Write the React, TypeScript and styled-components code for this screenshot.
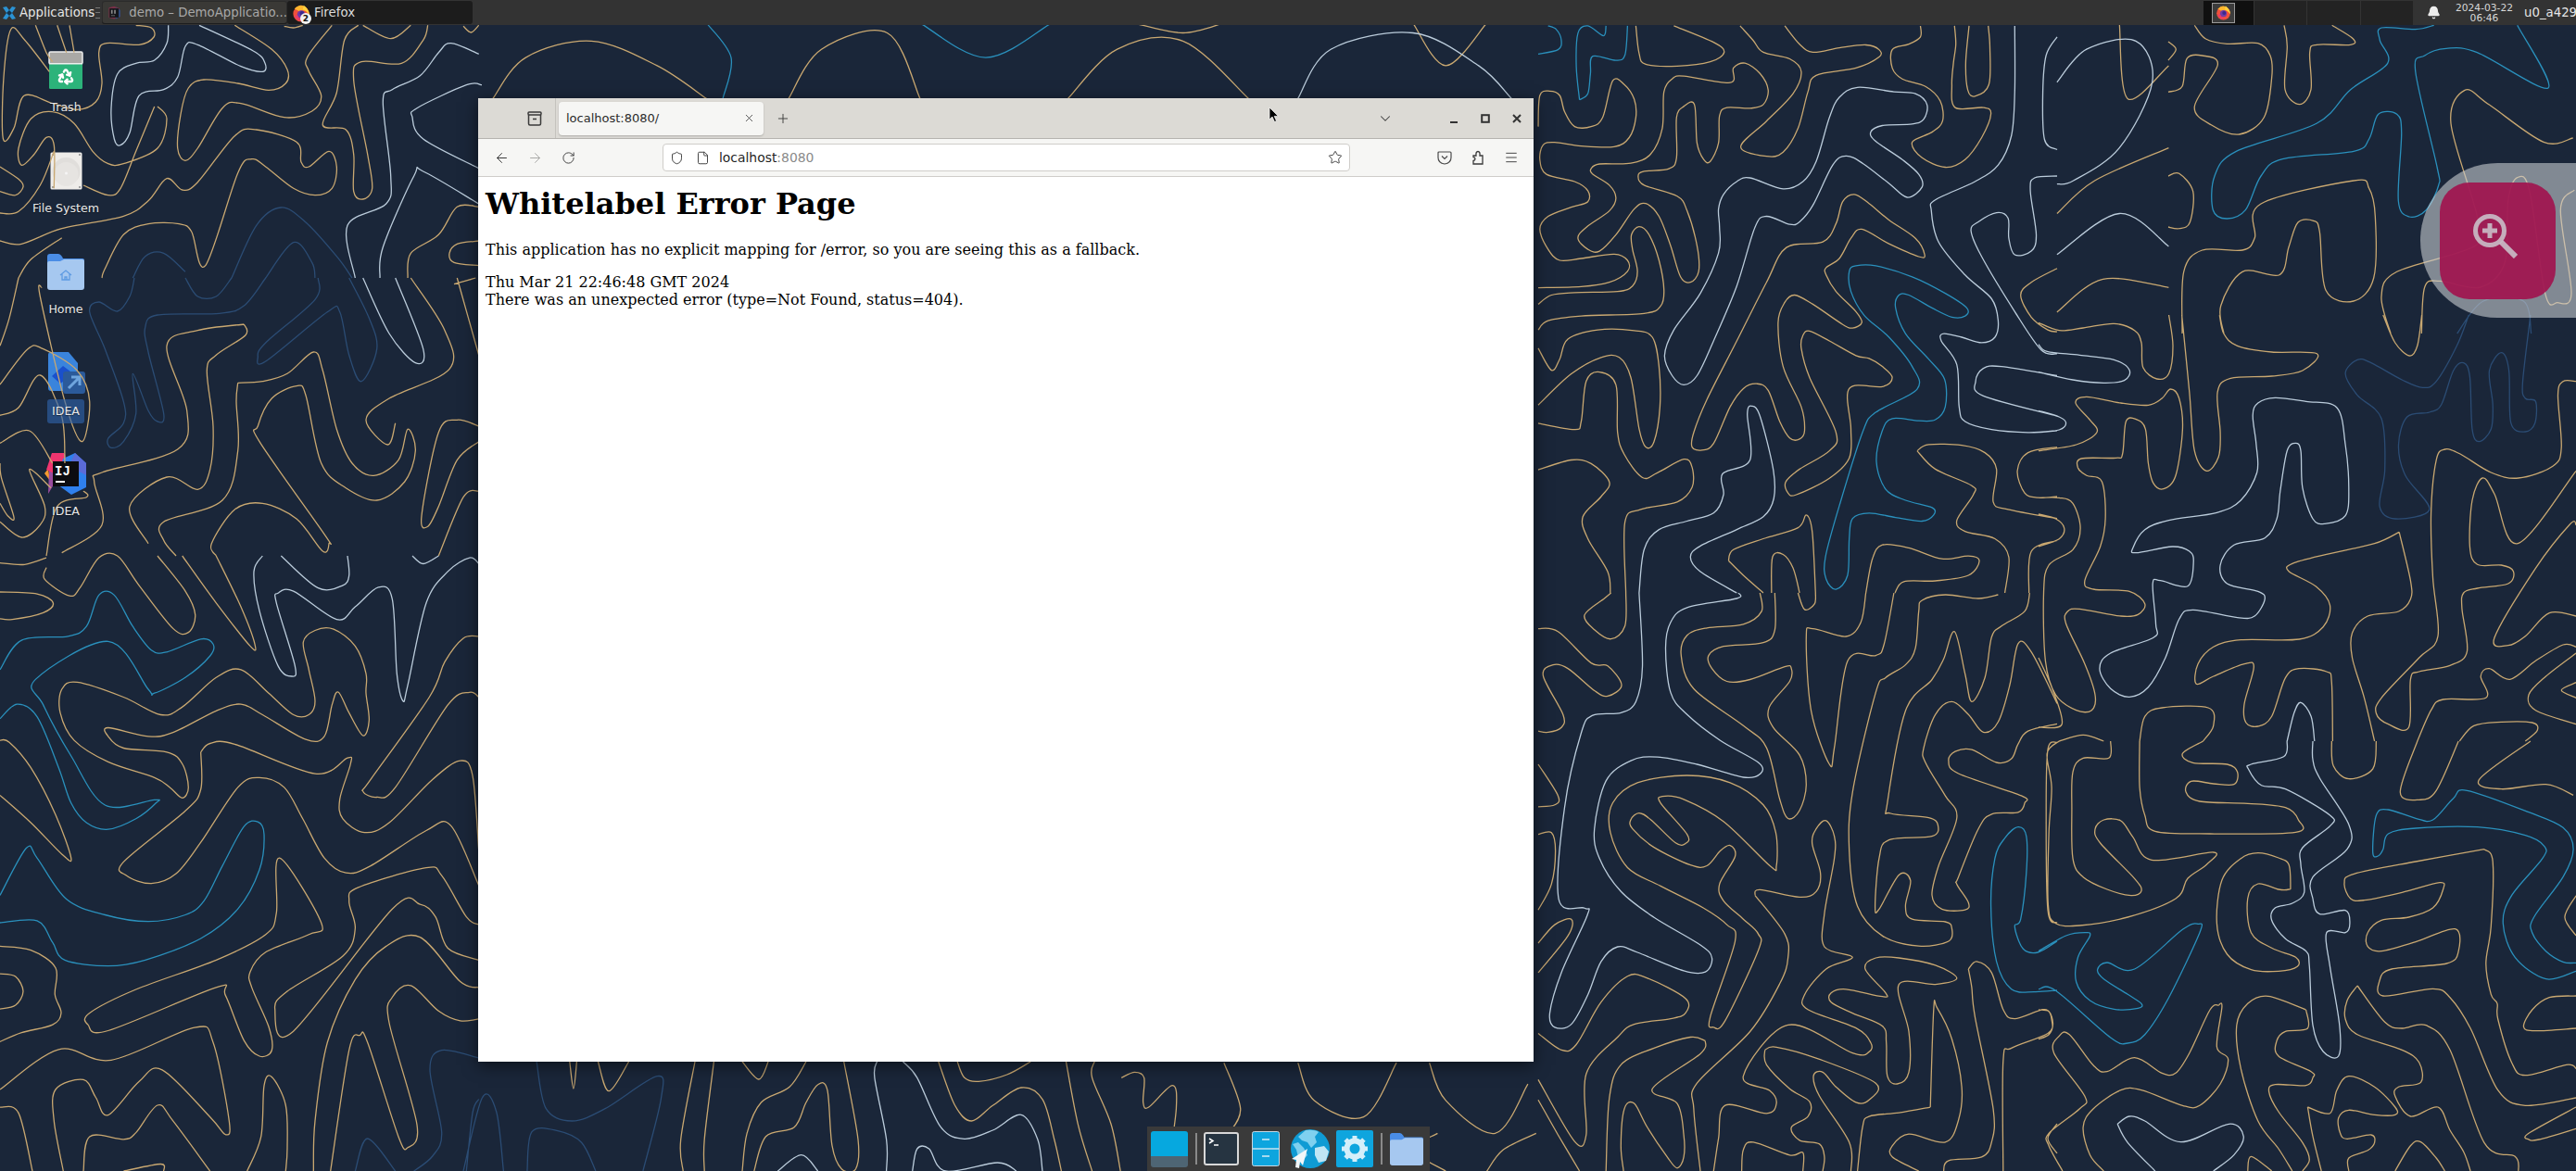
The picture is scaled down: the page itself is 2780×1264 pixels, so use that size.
import React from "react";
import styled, { createGlobalStyle } from "styled-components";
import {
    ArrowLeft,
    ArrowRight,
    Bell,
    ChevronDown,
    File,
    Menu,
    Plus,
    Recycle,
    RotateCw,
    Shield,
    Star,
    X,
} from "lucide-react";

type Trace = {
    x: number;
    y: number;
    sx: number;
    sy: number;
    g?: string[];
    w?: string[];
    b?: string[];
    d?: string[];
};

// contour lines of the wallpaper, noted per region of the desktop
const TRACES: Trace[] = [
    {
        x: 1660, y: 20, sx: 2.8, sy: 2.529,
        g: [
            "295,20 305,95 325,125 420,130 520,118 562,92 530,65 410,20",
            "610,20 650,60 680,92 760,110 795,145 770,205 690,280 612,350 690,376 740,365 785,300 815,200 840,155 960,135 1030,105 1030,85 990,72 910,80 830,92 790,70 745,20",
            "1155,20 1155,50 1120,70 1070,85 1070,135 1100,165 1170,185 1215,225 1222,280 1190,310 1130,338 1160,380 1230,406 1290,385 1340,325 1368,260 1345,243 1260,243 1250,180 1255,120 1262,70 1258,20",
            "1302,20 1292,120 1298,195 1320,212 1362,180 1365,80 1360,20",
            "1568,682 1490,720 1458,755 1490,815 1540,850 1568,855",
            "1568,1170 1480,1185 1448,1235 1470,1295 1510,1308 1568,1305",
            "1145,1180 1180,1163 1280,1165 1350,1185 1385,1230 1375,1320 1420,1340 1568,1365",
            "1145,1180 1200,1230 1310,1275 1315,1300 1265,1370 1290,1400 1380,1420 1422,1470 1410,1568",
            "1568,1425 1490,1455 1483,1568",
            "1078,1568 1105,1537 1200,1535 1300,1520 1333,1480 1300,1467 1220,1475 1120,1445 1040,1437 1010,1475 990,1568",
            "940,1010 1040,1005 1070,980 1040,950 1000,928 960,920 880,880 820,853 800,865 795,900 820,980 900,1130 880,1180 790,1230 748,1265 755,1295 780,1300 880,1255 940,1200 945,1120 940,1010",
            "870,680 910,655 945,600 978,575 1060,615 1150,650 1168,645 1140,600 1060,550 1000,505 955,480 920,500 900,560 860,610 750,625 690,720 600,880 510,1040 470,1130 465,1170 495,1178 530,1160 580,1060 620,1010 660,997 695,1015 730,1100 760,1145 790,1148 805,1125 795,1060 740,950 725,830 745,775 775,755 830,780 920,835 950,845 978,830 960,800 900,745 870,700 870,680",
            "0,295 5,210 35,198 65,210 80,255 110,295 160,295 195,270 225,170 260,180 290,220 295,270 275,325 230,350 130,348 50,338 15,345 5,385 25,425 110,445 150,470 150,500 100,515 30,540 5,575 30,630 65,660 130,655 230,643 270,660 270,690 215,720 130,732 0,735",
            "0,780 40,755 110,748 240,745 285,730 300,690 285,630 282,590 305,568 335,590 365,660 380,740 370,785 320,805 130,812 30,825 0,850",
            "120,600 145,570 215,525 235,490 215,455 165,425 160,410 185,397 280,395 340,370 375,300 380,200 405,165 440,157 580,175 590,135 625,122 670,150 695,195 680,235 640,245 570,243 548,265 545,340 520,390 500,385 480,340 472,235 440,240 418,270 418,380 395,410 320,417 302,430 320,455 420,485 450,525 480,620 485,690 460,720 430,705 400,620 365,540 325,505 290,520 235,590 185,635 150,630 120,600",
            "0,900 40,960 65,930 90,875 180,850 290,852 345,870 365,950 368,1060 350,1155 325,1170 305,1120 280,980 245,925 190,925 100,970 0,1055",
            "0,1105 110,1122 130,1100 145,990 185,965 235,1000 240,1130 260,1190 315,1253 360,1240 440,1203 465,1225 465,1280 420,1320 310,1340 262,1375 265,1568",
            "0,1232 100,1205 160,1215 215,1265 190,1305 135,1360 150,1420 210,1510 218,1568",
            "575,1480 590,1450 680,1420 785,1390 810,1355 828,1400 838,1568",
            "575,1480 620,1520 680,1568",
            "705,1568 708,1470 740,1463 770,1500 790,1568",
        ],
        w: [
            "1440,20 1440,200 1430,320 1390,400 1320,445 1200,495 1188,525 1210,610 1290,700 1370,765 1390,825 1380,870 1340,885 1280,870 1225,860 1218,880 1265,945 1272,1060 1290,1100 1370,1122 1480,1130 1568,1125",
            "1568,50 1535,100 1525,200 1530,330 1568,358",
            "1568,430 1500,435 1487,470 1505,590 1490,635 1440,645 1422,600 1420,545 1385,530 1330,555 1308,580 1340,650 1440,800 1520,905 1568,915",
            "1568,975 1400,950 1345,955 1322,990 1345,1030 1568,1085",
            "545,520 560,480 600,445 640,435 740,465 800,445 840,390 880,270 910,215 965,188 1075,200 1140,205 1175,235 1165,275 1130,288 1040,292 1005,310 1020,335 1100,385 1150,425 1160,460 1115,488 1060,450 980,395 930,375 890,400 830,510 790,555 760,562 690,540 655,570 600,730 530,880 480,975 440,1000 405,975 382,920 410,850 490,750 545,640 548,570 545,520",
            "305,1568 320,1450 365,1395 450,1372 530,1350 560,1300 557,1243 640,1205 632,1080 645,1058 670,1085 710,1230 712,1310 680,1360 600,1395 490,1440 460,1470 490,1510 600,1568",
        ],
        b: [
            "0,97 60,85 70,60 55,30 30,20",
            "125,222 150,205 158,150 165,103 235,114 262,100 270,20",
            "205,20 197,47 150,20 120,40 115,130 125,222",
            "940,690 960,675 1020,675 1130,705 1230,750 1295,790 1290,812 1250,815 1190,790 1120,755 1090,755 1080,790 1110,860 1180,930 1228,985 1230,1060 1200,1095 1150,1098 1070,1092 1040,1125 1022,1210 1050,1285 1110,1315 1190,1335 1195,1355 1160,1372 1080,1362 1000,1350 950,1365 940,1420 935,1520 900,1558 870,1530 868,1470 910,1330 980,1130 1020,1075 1145,1012 1130,950 1060,870 985,810 945,745 940,690",
        ],
    },
    {
        x: 2340, y: 0, sx: 3, sy: 3,
        g: [
            "85,82 120,125 190,142 290,140 330,180 335,250 310,380 230,435 140,405 85,345 160,210 110,180 60,190 45,280 0,298",
            "0,135 25,160 0,195",
            "375,82 385,150 378,290 425,338 462,290 458,170 480,145 590,145 598,125 530,82",
            "0,570 35,562 80,620 70,720 35,740 0,735",
            "45,1080 50,880 110,810 240,810 280,770 300,660 600,585 650,610 670,700 665,900 600,975 510,940 490,750 470,715 420,720 390,800 360,890 240,880 170,990 180,1080",
            "720,1080 690,960 740,880 995,795 1000,700 915,400 960,292 1040,340 1215,460 1310,447",
            "820,1080 830,930 880,910 1010,930 1090,850 1100,650 1130,575 1170,620 1220,950 1260,980 1305,950 1270,680 1315,615",
        ],
        b: [
            "860,82 800,95 690,90 685,130 710,205 590,290 480,400 220,490 150,570 145,680 190,708 250,680 300,570 370,515 600,490 650,450 680,370 740,370 755,430 745,650 780,702 835,680 875,600 870,540 800,230 830,180 900,157 1000,170 1230,285 1130,82",
        ],
        d: ["935,1080 1020,975 1150,975 1175,1080"],
    },
    {
        x: 2200, y: 340, sx: 2.703, sy: 3,
        g: [
            "0,25 60,50 130,42 220,28 280,50 300,90 305,170 345,207 380,190 392,100 380,0",
            "0,440 110,420 170,380 150,340 108,285 140,265 240,285 320,292 360,270 385,240 410,270 420,370 400,520 365,563 335,545 320,480 312,370 285,338 255,345 245,450 225,463 125,465 115,495 140,520 185,540 195,660 180,750 135,860 160,888 265,895 310,935 290,970 240,975 120,952 85,960 80,1000 135,1130 165,1230 155,1280 110,1280 50,1230 20,1120 15,900 30,810 100,760 122,690 100,610 60,592 0,592",
            "0,645 50,660 75,690 60,725 0,750",
            "418,0 440,250 455,440 490,505 525,460 530,380 522,250 560,205 680,198 770,180 812,125 680,120 580,100 540,60 528,0",
            "1005,0 1040,90 1082,132 1105,100 1118,0",
            "1568,215 1530,215 1515,260 1525,430 1500,490 1400,528 1320,510 1230,450 1185,435 1160,470 1145,640 1150,850 1165,1040 1110,1110 1000,1240 985,1290 1020,1325 1080,1335 1085,1180 1110,1155 1200,1135 1250,1090 1235,950 1240,900 1280,885 1370,870 1385,830 1350,810 1280,808 1258,750 1265,600 1295,528 1330,580 1398,740 1568,505",
            "1568,680 1550,678 1450,820 1330,1045 1370,1070 1420,1040 1490,965 1568,975",
            "1568,1075 1530,1068 1450,1120 1375,1180 1315,1145 1290,1170 1305,1240 1180,1245 1145,1280 1105,1380",
            "1568,1095 1480,1170 1430,1230 1450,1280 1568,1325",
            "1568,1190 1525,1215 1568,1240",
            "1228,1380 1270,1330 1350,1318 1440,1320 1455,1345 1420,1380",
            "1052,703 980,740 840,775 740,805 730,830 810,880 850,940 830,1010 760,1050 590,1052 510,1075 465,1130 460,1195 510,1170 600,1130 628,1140 600,1260 605,1320 640,1332 680,1300 720,1175 760,1145 840,1155 855,1190 858,1380",
            "1052,703 1085,860 1085,920 1050,960 960,975 915,1030 915,1110 950,1240 980,1380",
            "295,1380 310,1300 360,1272 495,1272 510,1330 480,1380",
            "60,1380 130,1360 190,1380",
            "0,1110 40,1210 68,1325 0,1335",
        ],
        w: [
            "0,95 25,118 120,130 220,145 265,178 250,212 190,220 100,210 0,185",
            "0,310 60,330 80,350 60,372 0,380",
            "625,325 640,285 690,268 780,280 870,300 895,420 905,560 895,650 835,676 800,660 770,560 765,440 750,415 725,440 705,570 695,660 660,722 570,745 530,810 550,870 640,895 660,920 630,975 580,980 450,955 410,985 370,1110 320,1205 265,1237 210,1210 178,1145 210,1095 335,1045 342,1000 333,870 355,860 435,878 452,800 440,765 390,750 285,770 275,755 310,695 380,665 520,640 590,600 637,510 635,420 625,325",
            "725,1380 745,1290 765,1255 795,1300 805,1380",
        ],
        d: [
            "1255,0 1220,100 1160,215 1120,235 1060,210 970,155 930,145 895,190 930,260 1000,335 1010,500 995,620 1040,660 1140,630 1070,520 1050,420 1075,330 1140,315 1175,290 1210,180 1240,155 1258,200 1265,370 1285,410 1320,370 1325,290 1315,180 1350,122 1372,180 1378,350 1420,378 1448,350 1450,280 1420,270 1412,220 1435,0",
        ],
    },
    {
        x: 1660, y: 640, sx: 2.8, sy: 2.513,
        g: [
            "265,0 262,90 220,125 170,100 140,60 200,15 220,0",
            "670,0 675,50 620,85 510,95 450,115 432,170 470,260 620,360 690,420 730,560 755,612 790,590 810,520 790,440 710,365 698,310 760,240 765,205 745,200 640,235 570,240 525,205 515,170 560,145 680,135 715,100 715,0",
            "785,0 805,45 835,30 838,0",
            "990,0 975,80 930,118 830,97 810,120 825,320 880,465 895,420 935,185 1020,170 1045,140 1075,0",
            "1390,5 1330,15 1230,5 1160,20 1150,50 1140,150 1110,195 1050,230 1020,270 950,540 940,700 965,850 1040,930 1150,958 1240,945 1250,910 1230,892 1130,885 1110,850 1125,780 1090,765 1030,858 1018,850 1030,720 1060,670 1190,660 1208,630 1180,610 1065,598 1055,570 1110,320 1190,235 1225,180 1258,105 1290,220 1310,295 1350,230 1370,120 1400,90 1470,50 1485,0",
            "1568,355 1480,375 1450,410 1430,450 1385,460 1310,425 1260,430 1240,455 1270,490 1460,550 1470,570 1450,595 1370,600 1330,640 1270,770 1265,790 1300,840 1290,860 1220,858 1190,820 1210,740 1265,610 1230,550 1170,460 1165,420 1200,330 1250,295 1300,330 1345,378 1390,350 1425,250 1450,138 1490,160 1568,300",
            "1568,405 1540,425 1535,600 1540,860 1568,895",
            "720,740 718,650 680,575 580,515 450,495 300,515 225,570 218,650 270,745 370,795 500,855 570,900 595,945 520,1150 530,1178 565,1160 665,970 665,925 620,885 560,835 548,790 595,715 580,685 550,700 510,740 460,738 350,690 285,640 280,615 305,597 340,615 415,678 445,680 450,655 370,570 375,552 440,560 560,620 700,740 720,740",
            "655,820 670,805 790,825 840,810 853,760 828,680 840,640 870,618 895,660 895,720 865,870 865,960 950,988 870,1020 805,1090 815,1130 960,1180 1005,1220 1000,1245 950,1248 755,1172 620,1310 700,1350 720,1385 690,1412 565,1390 545,1480 530,1568",
            "655,820 745,925 755,990 730,1060 640,1190 480,1330 470,1400 490,1568",
            "1265,1045 1200,1010 1090,990 1020,990 988,1020 1050,1085 1040,1095 930,1075 885,1085 885,1110 950,1140 1040,1175 1052,1220 1055,1310 1085,1332 1120,1300 1120,1190 1090,1062 1200,1062 1265,1045",
            "1185,1395 1195,1130 1205,1125 1250,1210 1280,1340 1270,1430 1230,1490 1120,1468 1070,1500 1070,1530 1150,1568",
            "1185,1395 1090,1410 1000,1420 980,1450 965,1568",
            "685,1240 720,1232 850,1265 1020,1330 1000,1375 960,1382 900,1340 860,1300 832,1310 850,1365 940,1490 945,1568",
            "685,1240 690,1280 760,1345 820,1380 815,1420 765,1450 790,1485 850,1495 865,1530 860,1568",
            "1300,1020 1325,1000 1370,1030 1405,1130 1440,1155 1530,1130 1552,1160 1540,1195 1430,1235 1405,1270 1405,1568",
            "1300,1020 1310,1070 1320,1150 1375,1400 1370,1490 1340,1530 1240,1540 1225,1568",
            "1568,1440 1540,1480 1568,1520",
            "0,97 60,105 160,190 210,198 252,250 210,280 170,265 90,205 45,195 15,225 75,330 70,365 30,378 0,375",
            "0,465 60,550 50,575 0,580",
            "0,655 40,650 52,700 40,790 0,860",
            "0,950 50,900 100,885 90,930 0,1030",
            "0,1195 70,1240 115,1225 190,1110 270,1040 330,1045 445,1100 445,1140 400,1155 290,1170 240,1205 145,1305 145,1470 110,1488 0,1320",
            "0,1375 60,1470 125,1568",
            "505,1215 460,1205 350,1235 250,1280 215,1370 205,1568",
            "505,1215 490,1250 345,1345 420,1385 440,1470 440,1530 420,1560 390,1530 330,1450 290,1385 260,1400 250,1500 258,1568",
            "615,1568 620,1510 650,1490 760,1525 800,1518 800,1568",
        ],
        w: [
            "305,0 315,200 295,295 250,325 165,332 130,380 80,580 62,830 140,855 148,875 70,1030 35,1140 50,1178 100,1170 150,1090 190,1000 240,960 300,975 440,1025 505,1028 525,990 490,955 350,880 250,810 185,720 170,640 205,510 280,455 360,445 480,465 620,500 672,490 665,460 550,400 450,330 400,270 385,150 400,80 450,40 600,15 605,0",
        ],
        b: [
            "1568,1078 1500,1082 1430,1075 1385,1000 1368,850 1380,720 1410,665 1450,635 1475,660 1475,760 1458,885 1440,905 1465,965 1510,975 1568,945",
        ],
    },
    {
        x: 2200, y: 800, sx: 2.703, sy: 3,
        g: [
            "210,0 205,55 130,55 100,100 97,220 100,380 130,440 200,480 270,500 300,485 280,445 180,330 165,285 190,255 240,258 275,310 330,385 510,360 490,400 435,445 400,510 260,570 120,597 50,590 28,530 30,300 38,150 25,40 60,0",
            "295,0 295,150 310,240 340,292 500,300 750,295 758,255 720,215 610,202 470,195 430,165 445,130 510,138 570,140 580,100 550,75 450,70 420,40 480,0",
            "855,0 860,80 905,122 975,90 985,0",
            "1105,0 1055,165 1110,190 1160,160 1225,0",
            "1435,0 1285,125 1350,155 1480,140 1560,175",
            "1568,500 1535,570 1568,630",
            "1300,350 1100,390 920,430 892,460 910,510 950,515 1060,490 1170,458 1180,480 1150,540 1080,570 1000,580 960,620 960,665 1000,680 1100,650 1215,608 1225,680 1190,720 1030,738 995,775 1005,825 1150,802 1200,830 1260,930 1340,1130 1420,1180 1568,1155",
            "1300,350 1325,390 1320,600 1305,720 1320,820 1338,850 1340,900 1380,1040 1420,1082 1540,1048 1568,1060",
            "1568,825 1490,830 1440,870 1415,925 1450,938 1568,930",
            "1568,1185 1430,1270 1430,1290 1460,1290 1568,1255",
            "0,870 30,875 42,915 30,950 0,965",
            "730,480 700,480 640,462 610,510 620,620 680,670 750,700 755,730 700,745 620,740 550,690 520,590 535,450 590,380 640,362 700,378 730,400 735,470 730,480",
            "525,855 500,870 440,1010 400,1075 360,1075 280,1025 200,1070 160,1050 90,950 60,955 45,1010 135,1150 120,1190 30,1270 30,1310 70,1392",
            "525,855 535,860 520,990 553,1030 530,1110 470,1180 420,1180 300,1130 240,1130 160,1190 130,1250 150,1340 190,1392",
            "780,870 670,826 610,850 578,920 590,1060 640,1230 700,1320 740,1392",
            "780,870 785,930 720,940 695,970 700,1020 795,1070 800,1090 780,1115 690,1112 672,1135 700,1200 770,1300 790,1355 770,1392",
            "930,792 900,840 895,900 930,950 1060,1000 1110,1040 1115,1105 1050,1120 1040,1150 1085,1215 1165,1185 1200,1260 1240,1330 1260,1392",
            "930,792 1010,910 1060,930 1130,920 1200,1000 1300,1300 1390,1345 1400,1392",
            "785,1185 850,1205 870,1130 905,1085 980,1120 1040,1185 1040,1210 980,1210 905,1195 875,1220 880,1270 900,1288 970,1275 980,1300 960,1325 905,1350 905,1392",
            "785,1185 800,1280 825,1392",
            "1040,1392 1085,1310 1115,1298 1160,1350 1185,1392",
            "610,1392 620,1345 680,1392",
        ],
        w: [
            "725,0 715,50 620,75 612,90 650,143 720,155 850,240 850,275 770,345 765,400 775,490 740,525 690,540 680,580 720,640 780,680 790,730 800,920 830,1005 875,1020 878,920 850,730 840,620 895,620 908,590 895,548 820,560 800,510 800,440 900,350 905,270 820,120 800,60 800,0",
            "230,1240 265,1215 310,1230 415,1298 555,1240 598,1280 570,1340 510,1392",
            "230,1240 260,1300 340,1392",
        ],
        b: [
            "1568,718 1530,715 1480,680 1440,620 1445,570 1530,440 1560,350 1530,280 1430,230 1250,160 1210,185 1150,255 1100,250 1020,222 985,240 975,360 990,372 1005,350 1020,300 1100,282 1280,278 1420,305 1475,340 1470,380 1380,500 1355,590 1390,700 1480,770 1568,745",
            "0,680 80,630 135,620 150,630 115,700 110,780 150,840 220,868 290,865 300,850 260,820 190,770 172,740 200,717 280,738 420,610 465,592 470,620 380,830 310,950 260,978 210,960 50,808 0,803",
        ],
    },
    {
        x: 0, y: 600, sx: 3, sy: 2.361,
        g: [
            "0,92 120,97 172,120 140,145 40,162 0,160",
            "0,18 80,22 150,5",
            "150,30 145,60 225,102 260,80 320,5 380,0 450,75 560,185 610,195 632,150 600,90 510,0",
            "590,0 700,120 810,230 825,225 780,130 700,0",
            "520,405 400,360 250,322 200,340 195,400 240,470 350,525 500,565 550,590 590,617 610,590 590,530 540,500 400,490 350,460 350,438 480,460 560,450 700,395 780,378 850,405 990,468 1050,460 1075,380 1095,347 1130,400 1175,458 1195,420 1185,350 1185,300 1150,230 1080,187 1020,190 982,220 1000,290 1020,370 1000,405 950,405 870,350 780,290 700,310 590,385 520,405",
            "650,500 680,478 760,480 1020,555 1125,515 1135,530 1100,620 1110,670 1180,705 1260,680 1400,570 1490,522 1530,560 1550,750",
            "650,500 650,595 600,650 400,780 410,815 490,835 570,810 650,730 770,590 840,565 920,590 980,670 1050,770 1120,808 1200,790 1380,700 1460,688 1550,840",
            "1550,205 1500,210 1440,270 1390,360 1200,570 1175,600 1220,615 1280,590 1450,380 1520,348 1550,360",
            "1550,940 1510,920 1430,815 1380,795 1160,845 1130,880 1150,950 1110,1020 930,1110 890,1155 945,1215 1270,900 1360,888 1410,920 1450,1000 1550,1030",
            "1550,1100 1490,1085 1360,972 1250,995 1150,1080 1060,1240 1020,1440 1015,1568",
            "1550,1180 1490,1185 1420,1160 1330,1095 1270,1125 1260,1190 1350,1450 1320,1508 1290,1480 1190,1240 1165,1222 1130,1260 1070,1568",
            "905,770 895,910 860,965 700,1030 440,1105 290,1165 285,1195 350,1210 700,1100 730,1120 790,1235 840,1275 880,1260 870,1200 815,1100 810,1060 860,1010 1000,965 1040,935 905,770",
            "0,995 100,1005 180,1050 178,1118 198,1165 170,1195 70,1215 0,1238",
            "0,1065 50,1072 75,1110 50,1145 0,1155",
            "0,1360 190,1258 360,1285 630,1202 690,1240 742,1440 730,1475 680,1430 525,1310 450,1340 350,1425 310,1380 270,1335 180,1360 175,1440 205,1568",
            "0,1405 60,1420 105,1568",
            "270,1568 290,1480 400,1487 440,1470 510,1400 560,1440 680,1568",
            "800,1568 845,1480 855,1350 880,1328 925,1400 930,1510 925,1568",
            "400,1568 520,1550 530,1568",
            "0,470 30,475 100,540 180,660 230,770 200,760 100,680 0,610",
        ],
        w: [
            "850,0 822,40 840,140 900,280 945,307 955,280 895,120 900,95 950,90 1090,162 1150,130 1225,80 1270,110 1285,300 1305,370 1320,330 1380,120 1450,40 1520,5 1550,20",
            "910,0 1030,82 1110,75 1130,50 1125,0",
            "1335,0 1370,20 1420,0",
        ],
        b: [
            "0,290 70,215 220,205 280,180 320,100 370,100 430,180 490,240 540,245 650,212 690,225 680,255 600,310 500,350 480,340 350,218 115,315 140,380 230,510 340,635 500,622 505,630 440,670 350,697 280,680 230,630 190,540 120,410 55,378 0,415",
            "0,865 85,745 120,770 215,875 340,915 480,932 600,915 660,880 720,790 790,690 835,678 855,710 840,800 770,900 650,975 470,1030 350,1045 210,1030 170,985 120,930 0,935",
        ],
        d: [
            "1550,1280 1430,1260 1392,1310 1430,1470 1400,1530 1340,1568",
            "1150,1568 1190,1485 1280,1568",
            "1510,1568 1530,1420 1550,1385",
        ],
    },
    {
        x: 0, y: 0, sx: 3, sy: 3,
        g: [
            "160,232 80,130 35,95 12,250 10,448 45,415 78,310 170,335 250,355 310,330 330,270 320,170 345,140 450,145 498,120 490,90 440,82",
            "115,82 150,170 170,200",
            "185,82 215,170",
            "225,82 240,170",
            "760,82 880,160 930,225 925,270 870,292 770,270 660,258 610,285 585,370 575,480 600,520 640,480 720,350 780,335 920,380 1010,360 1040,310 1000,230 995,185 1075,82",
            "510,345 540,385 510,480 400,530 350,530 300,490 240,400 170,362 100,385 60,480 70,535 110,500 150,445 175,470 175,610",
            "500,345 440,490 390,610 350,632 270,600",
            "0,540 60,580 75,605 50,632 0,620",
            "0,690 60,685 130,600 175,490",
            "0,780 70,790 200,740 400,700 480,650 540,578 590,615 640,590 760,440 830,420 960,460 975,525 1000,540 1065,490 1090,540 1075,610 1020,632 950,610 860,540 815,515 770,560 665,860 620,750 580,725 480,725 400,760 340,870 330,900",
            "60,900 100,840 200,770",
            "1160,82 1115,130 1090,300 1045,405 1120,420 1145,500 1145,620 1175,645 1205,610 1190,500 1145,260 1170,200 1300,205 1370,130 1385,82",
            "1175,82 1265,125 1330,82",
            "920,85 950,90 980,82",
            "1500,85 1525,105 1550,82",
            "1550,670 1480,670 1420,760 1330,820 1320,900",
            "1550,780 1480,790 1455,820 1470,850 1550,860",
        ],
        w: [
            "545,82 540,140 500,195 440,205 380,240 360,350 370,450 390,470 420,430 450,310 530,290 575,250 600,150 640,145 780,215 850,232 858,205 820,165 645,82",
            "1150,900 1125,730 1250,660 1265,570 1240,330 1270,290 1360,245 1420,170 1460,140 1550,175",
            "1560,275 1510,275 1350,350 1335,380 1370,450 1550,545",
            "1230,900 1240,800 1340,570 1370,555 1550,660",
        ],
        d: [
            "750,900 830,730 910,672 990,720 1090,830 1140,900",
            "860,900 950,785 1010,850 1020,900",
            "430,900 470,830 530,820 600,880",
        ],
    },
    {
        x: 0, y: 300, sx: 3, sy: 3,
        g: [
            "770,340 850,335 930,310 1015,240 1045,300 1090,490 1140,600 1210,640 1290,590 1320,490 1345,560 1310,660 1220,720 1120,680 1040,600 990,380 960,350 880,390 835,480 840,530 1050,830 1065,860 1045,885 960,780 850,730 760,750 685,860 700,900",
            "770,340 765,400 770,560 720,720 530,790 530,850 570,900",
            "1330,0 1440,170 1455,295 1260,390 1185,460 1255,540 1280,470",
            "790,150 795,185 700,250 670,300 690,480 680,620 640,685 540,645 420,740 480,860",
            "790,150 640,170 540,220 605,430 575,555 330,630 305,660 330,800 200,890",
            "1550,480 1480,460 1420,500 1365,770 1385,805 1420,740 1480,590 1550,530",
            "1550,690 1500,710 1420,900",
            "1550,250 1480,0",
            "1470,20 1540,0",
            "0,345 90,230 140,230 250,300 290,400 265,530 210,400 130,60 135,30",
            "0,445 60,420 130,315 200,450 210,600",
            "0,220 30,130 60,0",
            "0,535 95,495 170,600",
            "0,600 5,650 45,775 25,770 0,730",
            "0,790 70,840 130,800 145,740 95,620 165,680",
            "150,900 185,740 280,710 270,690",
        ],
        w: [
            "1175,0 1260,180 1345,275 1370,230 1280,0",
        ],
        d: [
            "1130,0 1195,130 1220,230 1170,335 1130,250 1100,110 1060,110 860,270 835,255 860,210 1020,70 1030,0",
            "860,0 790,90 710,115 510,120 470,160 480,240 530,440 510,465 480,430 430,310 440,440 400,530 360,550 350,520 400,470 400,400 340,230 290,110 320,78 380,108 420,60 435,0",
            "600,0 640,60 700,60 750,0",
        ],
    },
    {
        x: 500, y: 1130, sx: 1.96, sy: 3,
        g: [
            "225,48 233,135 240,48",
            "285,48 308,143 350,48",
            "490,48 460,300 465,402",
            "530,48 510,300 510,402",
            "590,48 625,105 645,48",
            "725,48 690,130 630,180 600,280 590,402",
            "805,48 835,300 830,395 800,395 780,320 770,140 750,122 725,180 700,260 640,290 615,402",
            "1005,48 1040,190 1075,240 1120,190 1180,132 1225,170 1250,300 1265,402",
            "1045,48 1060,100 1090,112 1150,90 1200,48",
            "1275,48 1300,250 1330,402",
            "1335,48 1330,100 1370,250 1390,402",
            "1392,100 1420,82 1440,100 1438,180 1450,195 1500,125 1508,200 1490,402",
        ],
        w: [
            "875,48 870,100 895,300 895,402",
            "930,48 960,100 1010,260 1060,298 1120,270 1180,220 1215,300 1225,402",
            "665,402 715,350 750,402",
            "950,402 960,330 985,330 1020,402 1130,375 1170,402",
        ],
        d: [
            "155,48 175,200 230,240 300,200 410,95 418,170 380,402",
            "0,402 40,165 70,210 85,402",
            "135,402 145,275 200,272 250,310 280,402",
        ],
    },
    {
        // band above the window, the strip beside the top right lines, right end of the band below the window
        x: 0, y: 0, sx: 0.564, sy: 0.564,
        g: [
            "300,60 320,35 360,25 400,40 430,60",
            "480,60 500,30 540,20 560,60",
            "650,60 680,30 720,25 760,60",
            "690,14 720,20 745,14",
            "860,14 880,40 905,14",
            "870,647 880,670 910,690 930,660",
            "935,690 915,700 905,713",
            "745,647 755,675 748,690",
            "790,647 800,670 830,680 850,647",
            "875,690 860,700 880,713",
            "1252,130 1275,110 1320,90",
            "1320,40 1295,60 1290,14",
            "1252,190 1280,170 1320,175",
        ],
        w: [
            "790,60 810,30 860,20 900,40 920,60",
            "1252,50 1270,30 1300,25 1310,50 1290,90 1262,110 1252,112",
            "1252,155 1290,130 1320,150",
        ],
        b: ["430,14 445,35 440,60", "560,14 600,35 640,14"],
    },
];

const smooth = (raw: string, t: Trace) => {
    const pts = raw.split(" ").map((p) => {
        const [x, y] = p.split(",").map(Number);
        return [t.x + x / t.sx, t.y + y / t.sy];
    });
    const closed = raw.split(" ")[0] === raw.split(" ").slice(-1)[0];
    const n = pts.length;
    const at = (i: number) => {
        if (closed) return pts[((i % (n - 1)) + (n - 1)) % (n - 1)];
        return pts[Math.max(0, Math.min(n - 1, i))];
    };
    let d = `M${pts[0][0].toFixed(1)} ${pts[0][1].toFixed(1)}`;
    for (let i = 0; i < n - 1; i++) {
        const [p0, p1, p2, p3] = [at(i - 1), at(i), at(i + 1), at(i + 2)];
        const c1x = p1[0] + (p2[0] - p0[0]) / 6;
        const c1y = p1[1] + (p2[1] - p0[1]) / 6;
        const c2x = p2[0] - (p3[0] - p1[0]) / 6;
        const c2y = p2[1] - (p3[1] - p1[1]) / 6;
        d += `C${c1x.toFixed(1)} ${c1y.toFixed(1)} ${c2x.toFixed(1)} ${c2y.toFixed(1)} ${p2[0].toFixed(1)} ${p2[1].toFixed(1)}`;
    }
    return d;
};

const joined = (key: "g" | "w" | "b" | "d") =>
    TRACES.flatMap((t) => (t[key] || []).map((l) => smooth(l, t))).join(" ");

const GlobalStyle = createGlobalStyle`
    html, body {
        margin: 0;
        padding: 0;
        width: 2780px;
        height: 1264px;
        overflow: hidden;
        background: #1a2639;
        font-family: "DejaVu Sans", sans-serif;
    }
`;

const Screen = styled.div`
    position: relative;
    width: 2780px;
    height: 1264px;
    overflow: hidden;
    background: #1a2639;
`;

const WallpaperSvg = styled.svg`
    position: absolute;
    inset: 0;
`;

const Wallpaper = () => (
    <WallpaperSvg width={2780} height={1264} fill="none" strokeWidth={1.3}>
        <path d={joined("d")} stroke="#2b4c74" />
        <path d={joined("g")} stroke="#c9a871" />
        <path d={joined("b")} stroke="#2a90bc" />
        <path d={joined("w")} stroke="#bbccdb" />
    </WallpaperSvg>
);

/* top panel */
const Panel = styled.div`
    position: relative;
    display: flex;
    align-items: center;
    height: 27px;
    background: #333333;
    color: #e6e6e6;
    font-size: 13.3px;
`;

const AppMenu = styled.div`
    display: flex;
    align-items: center;
    gap: 3px;
    width: 103px;
    padding-left: 2px;
    box-sizing: border-box;
`;

const Handle = styled.div`
    width: 5px;
    height: 10px;
    margin-right: 2px;
    border-top: 1px solid #777;
    border-bottom: 1px solid #777;
    background: linear-gradient(#777, #777) center / 100% 1px no-repeat;
`;

const TaskButton = styled.div<{ $active?: boolean }>`
    display: flex;
    align-items: center;
    gap: ${(p) => (p.$active ? "4px" : "8px")};
    width: 200px;
    height: 25px;
    padding-left: 5px;
    box-sizing: border-box;
    border-radius: 3px;
    background: ${(p) => (p.$active ? "#1c1c1c" : "#3a3936")};
    box-shadow: ${(p) => (p.$active ? "none" : "inset 0 -1px 0 #1d1d1d, inset 0 0 0 1px #2b2b2b")};
    color: ${(p) => (p.$active ? "#dddddd" : "#a8a8a8")};
    white-space: nowrap;
`;

const PanelFill = styled.div`
    flex: 1;
`;

const Pager = styled.div`
    display: flex;
    height: 26px;
    width: 227px;
`;

const PagerCell = styled.div<{ $active?: boolean; $w: number }>`
    display: flex;
    align-items: center;
    width: ${(p) => p.$w}px;
    padding-left: 9px;
    background: ${(p) => (p.$active ? "#101010" : "#232323")};
    border-right: 1px solid #333;
    box-sizing: border-box;
`;

const PagerThumb = styled.div`
    display: flex;
    align-items: center;
    justify-content: center;
    width: 25px;
    height: 22px;
    background: #3c3c3c;
    border: 1px solid #9a9a9a;
    box-sizing: border-box;
`;

const Clock = styled.div`
    width: 64px;
    margin-left: 15px;
    font-size: 10.7px;
    line-height: 11px;
    text-align: center;
    color: #d8d8d8;
`;

const UserName = styled.div`
    width: 56px;
    margin-left: 11px;
    overflow: hidden;
    white-space: nowrap;
    color: #e6e6e6;
`;

const BellWrap = styled.div`
    display: flex;
    margin-left: 14px;
`;

const XfceLogo = () => (
    <svg width={16} height={16} viewBox="0 0 16 16">
        <path d="M1 2 L5 1 L8 5 L11 1 L15 2 L11 8 L15 14 L11 15 L8 11 L5 15 L1 14 L5 8 Z" fill="#2b93d4" />
        <path d="M5 8 L8 5 L11 8 L8 11 Z" fill="#12344f" />
    </svg>
);

const IdeaMini = () => (
    <svg width={20} height={20} viewBox="0 0 20 20">
        <path d="M3 3 L10 1 L17 4 L18 15 L10 18 L3 16 Z" fill="#7a3048" />
        <path d="M12 3 L18 6 L18 15 L12 18 Z" fill="#2b4f88" />
        <rect x={4} y={4} width={12} height={12} fill="#15161a" />
        <rect x={6} y={13} width={5} height={1} fill="#777" />
        <rect x={6} y={6} width={2} height={5} fill="#8a8a8a" />
        <rect x={10} y={6} width={2} height={5} fill="#8a8a8a" />
    </svg>
);

const FoxLogo = ({ size = 22 }: { size?: number }) => (
    <svg width={size} height={size} viewBox="0 0 22 22">
        <circle cx={11} cy={12} r={9.5} fill="#f0503c" />
        <path d="M3 6 Q11 -2 18 6 Q21 10 20.5 13 Q15 6 9 9 Z" fill="#ffb52e" />
        <path d="M14 2 Q20 6 20.5 13 Q18 8 13 7 Z" fill="#ffd23f" />
        <circle cx={11} cy={12.5} r={4.6} fill="#6e3aa8" />
        <circle cx={12} cy={11.5} r={2.6} fill="#3b2a8c" />
        <path d="M3 15 Q7 21 14 20.5 Q8 18 6 13 Z" fill="#e93a6c" />
    </svg>
);

const BadgeBox = styled.div`
    position: relative;
    display: flex;
`;

const CountBadge = styled.span`
    position: absolute;
    right: -1px;
    bottom: -2px;
    width: 12px;
    height: 12px;
    border-radius: 50%;
    background: #f2f2f2;
    color: #111;
    font-size: 9px;
    font-weight: 700;
    line-height: 12px;
    text-align: center;
`;

const TopPanel = () => (
    <Panel>
        <AppMenu>
            <XfceLogo />
            Applications
        </AppMenu>
        <Handle />
        <TaskButton>
            <IdeaMini />
            <span>demo – DemoApplicatio...</span>
        </TaskButton>
        <TaskButton $active>
            <BadgeBox>
                <FoxLogo size={20} />
                <CountBadge>2</CountBadge>
            </BadgeBox>
            <span>Firefox</span>
        </TaskButton>
        <PanelFill />
        <Pager>
            <PagerCell $active $w={55}>
                <PagerThumb>
                    <FoxLogo size={17} />
                </PagerThumb>
            </PagerCell>
            <PagerCell $w={57} />
            <PagerCell $w={58} />
            <PagerCell $w={57} />
        </Pager>
        <BellWrap>
            <Bell size={15} fill="#ececec" color="#ececec" />
        </BellWrap>
        <Clock>
            2024-03-22
            <br />
            06:46
        </Clock>
        <UserName>u0_a429</UserName>
    </Panel>
);

/* desktop icons */
const IconColumn = styled.div`
    display: flex;
    flex-direction: column;
    width: 80px;
    margin-left: 31px;
    padding-top: 18px;
`;

const IconCell = styled.div`
    display: flex;
    flex-direction: column;
    align-items: center;
    height: 109px;
`;

const IconArt = styled.div`
    display: flex;
    align-items: center;
    justify-content: center;
    height: 61px;
`;

const IconLabel = styled.div<{ $selected?: boolean }>`
    position: relative;
    padding: ${(p) => (p.$selected ? "3px 5px" : "0")};
    margin-top: ${(p) => (p.$selected ? "-2px" : "0")};
    border-radius: 3px;
    background: ${(p) => (p.$selected ? "rgba(48, 100, 172, 0.62)" : "transparent")};
    color: #e8e8e8;
    font-size: 12.6px;
    line-height: 20px;
    white-space: nowrap;
    text-shadow: 0 1px 1px rgba(0, 0, 0, 0.5);
`;

const TrashIcon = () => (
    <svg width={38} height={42} viewBox="0 0 38 42">
        <rect x={1} y={1} width={36} height={13} rx={1.5} fill="#aaa9a6" stroke="#eeeeee" strokeWidth={1.5} />
        <rect x={1} y={13} width={36} height={28} rx={1.5} fill="#2cb37a" />
        <rect x={1} y={13} width={36} height={1.5} fill="#eeeeee" />
        <Recycle x={9.5} y={18} size={19} color="#ffffff" strokeWidth={3} />
    </svg>
);

const DiskIcon = () => (
    <svg width={35} height={41} viewBox="0 0 35 41">
        <rect x={0.5} y={0.5} width={34} height={40} rx={1.5} fill="#eeece9" />
        <circle cx={17.5} cy={21} r={15} fill="#e0dedb" />
        <circle cx={17.5} cy={24} r={13} fill="#e6e4e1" />
        <circle cx={17.5} cy={23} r={1.5} fill="#f5f5f5" />
        <circle cx={3} cy={3} r={1} fill="#888" />
        <circle cx={32} cy={3} r={1} fill="#888" />
        <circle cx={3} cy={38} r={1} fill="#888" />
        <circle cx={32} cy={38} r={1} fill="#888" />
    </svg>
);

const FolderIcon = ({ width = 40, height = 39, home = false }: { width?: number; height?: number; home?: boolean }) => (
    <svg width={width} height={height} viewBox="0 0 40 39">
        <path d="M0 3 Q0 0 3 0 L12 0 Q14 0 16 3 L17 5 L38 5 Q40 5 40 7 L40 14 L0 14 Z" fill="#4a8de6" />
        <path d="M0 10 Q0 8 2 8 L14 8 L18 6 L38 6 Q40 6 40 8 L40 36 Q40 39 37 39 L3 39 Q0 39 0 36 Z" fill="#a6c8f0" />
        {home && (
            <path d="M14 23 L20 18 L26 23 M16 22 L16 28 L24 28 L24 22 M19 28 L19 25 L21 25 L21 28" fill="none" stroke="#5e9be2" strokeWidth={1.3} />
        )}
    </svg>
);

const IdeaLinkIcon = () => (
    <svg width={42} height={46} viewBox="0 0 42 46">
        <path d="M2 3 Q2 0 5 0 L24 0 L34 12 L34 39 Q34 42 31 42 L5 42 Q2 42 2 39 Z" fill="#3a84dc" />
        <path d="M18 15 L6 26 L15 34 L30 24 Z" fill="#1a50cc" />
        <rect x={18} y={21} width={24} height={24} rx={3} fill="#2b5a9a" />
        <path d="M24 39 L35 28 M27 27 L36 27 L36 36" fill="none" stroke="#6fa5de" strokeWidth={3} />
    </svg>
);

const IntellijIcon = () => (
    <svg width={46} height={46} viewBox="0 0 46 46">
        <path d="M4 17 L0 22 L6 30 Z" fill="#f59a2f" />
        <path d="M8 0 L22 1 L24 12 L10 34 L4 44 L5 18 Z" fill="#9a4c9e" />
        <path d="M8 0 L21 0 L23 10 L14 24 L2 18 Z" fill="#f0356f" />
        <path d="M33 0 L45 11 L45 37 L29 45 L14 34 L20 6 Z" fill="#2f80ed" />
        <path d="M33 0 L45 11 L45 24 L26 14 Z" fill="#5b6bd8" />
        <rect x={9} y={9} width={28} height={27} fill="#0c0c10" />
        <text x={11} y={24} fill="#ffffff" fontSize={14} fontWeight={700} fontFamily="'Liberation Mono', monospace">
            IJ
        </text>
        <rect x={12} y={30} width={10} height={2} fill="#ffffff" />
    </svg>
);

const DESKTOP_ITEMS = [
    { label: "Trash", art: <TrashIcon /> },
    { label: "File System", art: <DiskIcon /> },
    { label: "Home", art: <FolderIcon home /> },
    { label: "IDEA", art: <IdeaLinkIcon />, selected: true },
    { label: "IDEA", art: <IntellijIcon /> },
];

/* browser window */
const BrowserWindow = styled.div`
    position: absolute;
    left: 516px;
    top: 106px;
    display: flex;
    flex-direction: column;
    width: 1139px;
    height: 1040px;
    background: #ffffff;
    box-shadow: 0 4px 16px rgba(0, 0, 0, 0.55);
`;

const TabStrip = styled.div`
    display: flex;
    align-items: center;
    height: 43px;
    background: #dcdad5;
    border-bottom: 1px solid #b5b3af;
    box-sizing: content-box;
    color: #3a3a3a;
`;

const ViewButton = styled.div`
    display: flex;
    justify-content: center;
    width: 24px;
    margin-left: 49px;
`;

const StripDivider = styled.div`
    width: 1px;
    height: 43px;
    margin: 0 3px 0 10px;
    background: #c4c2bd;
`;

const Tab = styled.div`
    display: flex;
    align-items: center;
    justify-content: space-between;
    width: 221px;
    height: 36px;
    padding: 0 9px 0 8px;
    box-sizing: border-box;
    border-radius: 4px;
    background: #f6f6f4;
    box-shadow: 0 1px 2px rgba(0, 0, 0, 0.2);
    font-size: 13px;
    color: #2b2b2b;
`;

const NewTab = styled.div`
    display: flex;
    justify-content: center;
    width: 42px;
`;

const StripControls = styled.div`
    display: flex;
    align-items: center;
    margin-left: auto;
    padding-right: 1px;
`;

const ChevronSlot = styled.div`
    display: flex;
    justify-content: center;
    width: 34px;
    margin-right: 40px;
`;

const ControlSlot = styled.div`
    display: flex;
    justify-content: center;
    width: 34px;
`;

const NavBar = styled.div`
    display: flex;
    align-items: center;
    height: 40px;
    padding: 0 6px 0 7px;
    background: #f6f6f4;
    border-bottom: 1px solid #cfcdc9;
    color: #3a3a3a;
`;

const NavButton = styled.div<{ $off?: boolean }>`
    display: flex;
    align-items: center;
    justify-content: center;
    width: 36px;
    height: 30px;
    color: ${(p) => (p.$off ? "#a9a9a7" : "#3a3a3a")};
`;

const UrlBar = styled.div`
    display: flex;
    align-items: center;
    width: 742px;
    height: 30px;
    margin-left: 84px;
    padding: 0 7px 0 0;
    box-sizing: border-box;
    background: #ffffff;
    border: 1px solid #cfcdc9;
    border-radius: 4px;
`;

const UrlSlot = styled.div`
    display: flex;
    justify-content: center;
    width: 28px;
`;

const UrlText = styled.div`
    flex: 1;
    margin-left: 4px;
    font-size: 13.9px;
    color: #1f1f1f;
`;

const UrlPort = styled.span`
    color: #8a8a8a;
`;

const NavEnd = styled.div`
    display: flex;
    margin-left: auto;
`;

const PageBody = styled.div`
    flex: 1;
    padding: 10px 8px 0;
    background: #ffffff;
    color: #000000;
    font-family: "DejaVu Serif", serif;
    font-size: 16px;
`;

const ErrorTitle = styled.h1`
    margin: 0 0 21.44px;
    font-size: 32px;
    font-weight: 700;
`;

const ErrorText = styled.p`
    margin: 0 0 16px;
`;

const ViewIcon = () => (
    <svg width={18} height={18} viewBox="0 0 18 18" fill="none" stroke="#3a3a3a" strokeWidth={1.5}>
        <rect x={2} y={2} width={14} height={3} rx={1} />
        <path d="M2.5 5 L2.5 14.5 Q2.5 16 4 16 L14 16 Q15.5 16 15.5 14.5 L15.5 5" />
        <path d="M7 9.5 L11 9.5" />
    </svg>
);

const PocketIcon = () => (
    <svg width={16} height={16} viewBox="0 0 16 16" fill="none" stroke="#4a4a4a" strokeWidth={1.2}>
        <path d="M2 2 L14 2 Q15 2 15 3 L15 8 Q15 14 8 15 Q1 14 1 8 L1 3 Q1 2 2 2 Z" />
        <path d="M5 6.5 L8 9.5 L11 6.5" />
    </svg>
);

const PuzzleIcon = () => (
    <svg width={16} height={16} viewBox="0 0 16 16" fill="none" stroke="#3a3a3a" strokeWidth={1.3}>
        <path d="M3 15 L3 11.5 Q5 11 5 9.5 Q5 8 3 7.5 L3 6 L6 6 Q5.5 1.5 8 1.5 Q10.5 1.5 10 6 L13 6 L13 15 Z" />
    </svg>
);

const MinimizeGlyph = () => (
    <svg width={12} height={12} viewBox="0 0 12 12">
        <rect x={2} y={9} width={8} height={2} fill="#333" />
    </svg>
);

const MaximizeGlyph = () => (
    <svg width={12} height={12} viewBox="0 0 12 12" fill="none">
        <rect x={2.2} y={2.2} width={7.6} height={7.6} stroke="#333" strokeWidth={2} />
    </svg>
);

const CloseGlyph = () => (
    <svg width={12} height={12} viewBox="0 0 12 12" fill="none">
        <path d="M2 2 L10 10 M10 2 L2 10" stroke="#333" strokeWidth={2} />
    </svg>
);

const Browser = () => (
    <BrowserWindow>
        <TabStrip>
            <ViewButton>
                <ViewIcon />
            </ViewButton>
            <StripDivider />
            <Tab>
                <span>localhost:8080/</span>
                <X size={13} strokeWidth={1.4} />
            </Tab>
            <NewTab>
                <Plus size={16} strokeWidth={1.4} />
            </NewTab>
            <StripControls>
                <ChevronSlot>
                    <ChevronDown size={18} strokeWidth={1.4} />
                </ChevronSlot>
                <ControlSlot>
                    <MinimizeGlyph />
                </ControlSlot>
                <ControlSlot>
                    <MaximizeGlyph />
                </ControlSlot>
                <ControlSlot>
                    <CloseGlyph />
                </ControlSlot>
            </StripControls>
        </TabStrip>
        <NavBar>
            <NavButton>
                <ArrowLeft size={17} strokeWidth={1.4} />
            </NavButton>
            <NavButton $off>
                <ArrowRight size={17} strokeWidth={1.4} />
            </NavButton>
            <NavButton>
                <RotateCw size={15} strokeWidth={1.5} />
            </NavButton>
            <UrlBar>
                <UrlSlot>
                    <Shield size={15} strokeWidth={1.5} />
                </UrlSlot>
                <UrlSlot>
                    <File size={15} strokeWidth={1.5} />
                </UrlSlot>
                <UrlText>
                    localhost<UrlPort>:8080</UrlPort>
                </UrlText>
                <Star size={16} strokeWidth={1.4} />
            </UrlBar>
            <NavEnd>
                <NavButton>
                    <PocketIcon />
                </NavButton>
                <NavButton>
                    <PuzzleIcon />
                </NavButton>
                <NavButton>
                    <Menu size={16} strokeWidth={1.4} />
                </NavButton>
            </NavEnd>
        </NavBar>
        <PageBody>
            <ErrorTitle>Whitelabel Error Page</ErrorTitle>
            <ErrorText>This application has no explicit mapping for /error, so you are seeing this as a fallback.</ErrorText>
            <div>Thu Mar 21 22:46:48 GMT 2024</div>
            <div>There was an unexpected error (type=Not Found, status=404).</div>
        </PageBody>
    </BrowserWindow>
);

const Pointer = styled.svg`
    position: absolute;
    left: 1369px;
    top: 115px;
`;

/* magnifier shortcut on the right edge */
const Tray = styled.div`
    position: absolute;
    left: 2612px;
    top: 176px;
    right: 0;
    display: flex;
    align-items: center;
    height: 167px;
    padding-left: 21px;
    box-sizing: border-box;
    border-radius: 84px 0 0 84px;
    background: rgba(205, 208, 212, 0.58);
`;

const ZoomTile = styled.div`
    display: flex;
    align-items: center;
    justify-content: center;
    width: 125px;
    height: 126px;
    padding: 0 6px 10px 0;
    box-sizing: border-box;
    border-radius: 32px;
    background: rgba(160, 20, 80, 0.93);
`;

const ZoomGlyph = () => (
    <svg width={48} height={48} viewBox="0 0 48 48" fill="none" stroke="#c9bfc8" strokeOpacity={0.9}>
        <circle cx={18} cy={18} r={15.5} strokeWidth={5} />
        <path d="M30 30 L46 46" strokeWidth={6} />
        <path d="M18 10 L18 26 M10 18 L26 18" strokeWidth={5} />
    </svg>
);

/* dock */
const Dock = styled.div`
    position: absolute;
    left: 1238px;
    top: 1216px;
    display: flex;
    align-items: center;
    width: 305px;
    height: 48px;
    padding-left: 4px;
    box-sizing: border-box;
    background: #3a3a3a;
`;

const DockSlot = styled.div<{ $gap: number }>`
    display: flex;
    margin-left: ${(p) => p.$gap}px;
`;

const DockDivider = styled.div`
    width: 2px;
    height: 34px;
    background: #8a8a8a;
`;

const ShowDesktop = styled.div`
    width: 40px;
    height: 39px;
    border-radius: 3px;
    background: linear-gradient(#06a8df 0 70%, #4e6574 70% 100%);
`;

const TerminalIcon = () => (
    <svg width={38} height={36} viewBox="0 0 38 36">
        <rect x={1} y={1} width={36} height={34} rx={2} fill="#263441" stroke="#d8d8d8" strokeWidth={2} />
        <path d="M6 7 L10 9.5 L6 12" fill="none" stroke="#ffffff" strokeWidth={1.5} />
        <path d="M11 14 L16 14" stroke="#ffffff" strokeWidth={1.5} />
    </svg>
);

const CabinetIcon = () => (
    <svg width={30} height={38} viewBox="0 0 30 38">
        <rect x={0.5} y={0.5} width={29} height={37} rx={2} fill="#0ea5de" stroke="#c6d8e2" />
        <path d="M1 19 L29 19" stroke="#c6e4f2" strokeWidth={1.5} />
        <path d="M11 9 L19 9 M11 27 L19 27" stroke="#d8ecf5" strokeWidth={1.5} />
    </svg>
);

const GlobeIcon = () => (
    <svg width={42} height={42} viewBox="0 0 42 42">
        <circle cx={21} cy={21} r={21} fill="#0f9bd4" />
        <path d="M16 1 Q26 0 30 3 L26 8 L28 14 L22 20 L18 14 L12 12 L8 8 Z" fill="#7fd0ef" />
        <path d="M2 16 L8 14 L14 20 L18 28 L12 34 L8 30 L6 22 Z" fill="#7fd0ef" />
        <path d="M26 20 L36 18 L41 24 L38 34 L30 36 L26 28 Z" fill="#bfe6f5" />
        <path d="M1 32 L18 21 L13 39 L10 35 L9 42 L5 41 L6 33 Z" fill="#f2f6f8" />
    </svg>
);

const GearTile = styled.div`
    display: flex;
    align-items: center;
    justify-content: center;
    width: 40px;
    height: 40px;
    border-radius: 2px;
    background: #0ea5de;
`;

const GEAR_TEETH = [0, 45, 90, 135, 180, 225, 270, 315];

const GearIcon = () => (
    <svg width={32} height={32} viewBox="0 0 32 32" fill="none" stroke="#d4effa">
        <circle cx={16} cy={16} r={8.5} strokeWidth={6} />
        {GEAR_TEETH.map((a) => (
            <path key={a} d="M16 7 L16 2" strokeWidth={5} transform={`rotate(${a} 16 16)`} />
        ))}
    </svg>
);

const Desktop = () => (
    <Screen>
        <Wallpaper />
        <TopPanel />
        <IconColumn>
            {DESKTOP_ITEMS.map((item, i) => (
                <IconCell key={i}>
                    <IconArt>{item.art}</IconArt>
                    <IconLabel $selected={item.selected}>{item.label}</IconLabel>
                </IconCell>
            ))}
        </IconColumn>
        <Browser />
        <Pointer width={12} height={18} viewBox="0 0 12 18">
            <path d="M1 1 L1 14 L4 11 L6.5 16.5 L8.5 15.5 L6.2 10.4 L10.5 10.4 Z" fill="#000" stroke="#fff" strokeWidth={0.7} />
        </Pointer>
        <Tray>
            <ZoomTile>
                <ZoomGlyph />
            </ZoomTile>
        </Tray>
        <Dock>
            <ShowDesktop />
            <DockSlot $gap={8}>
                <DockDivider />
            </DockSlot>
            <DockSlot $gap={7}>
                <TerminalIcon />
            </DockSlot>
            <DockSlot $gap={14}>
                <CabinetIcon />
            </DockSlot>
            <DockSlot $gap={12}>
                <GlobeIcon />
            </DockSlot>
            <DockSlot $gap={7}>
                <GearTile>
                    <GearIcon />
                </GearTile>
            </DockSlot>
            <DockSlot $gap={8}>
                <DockDivider />
            </DockSlot>
            <DockSlot $gap={8}>
                <FolderIcon width={36} height={37} />
            </DockSlot>
        </Dock>
    </Screen>
);

export default function App() {
    return (
        <>
            <GlobalStyle />
            <Desktop />
        </>
    );
}
